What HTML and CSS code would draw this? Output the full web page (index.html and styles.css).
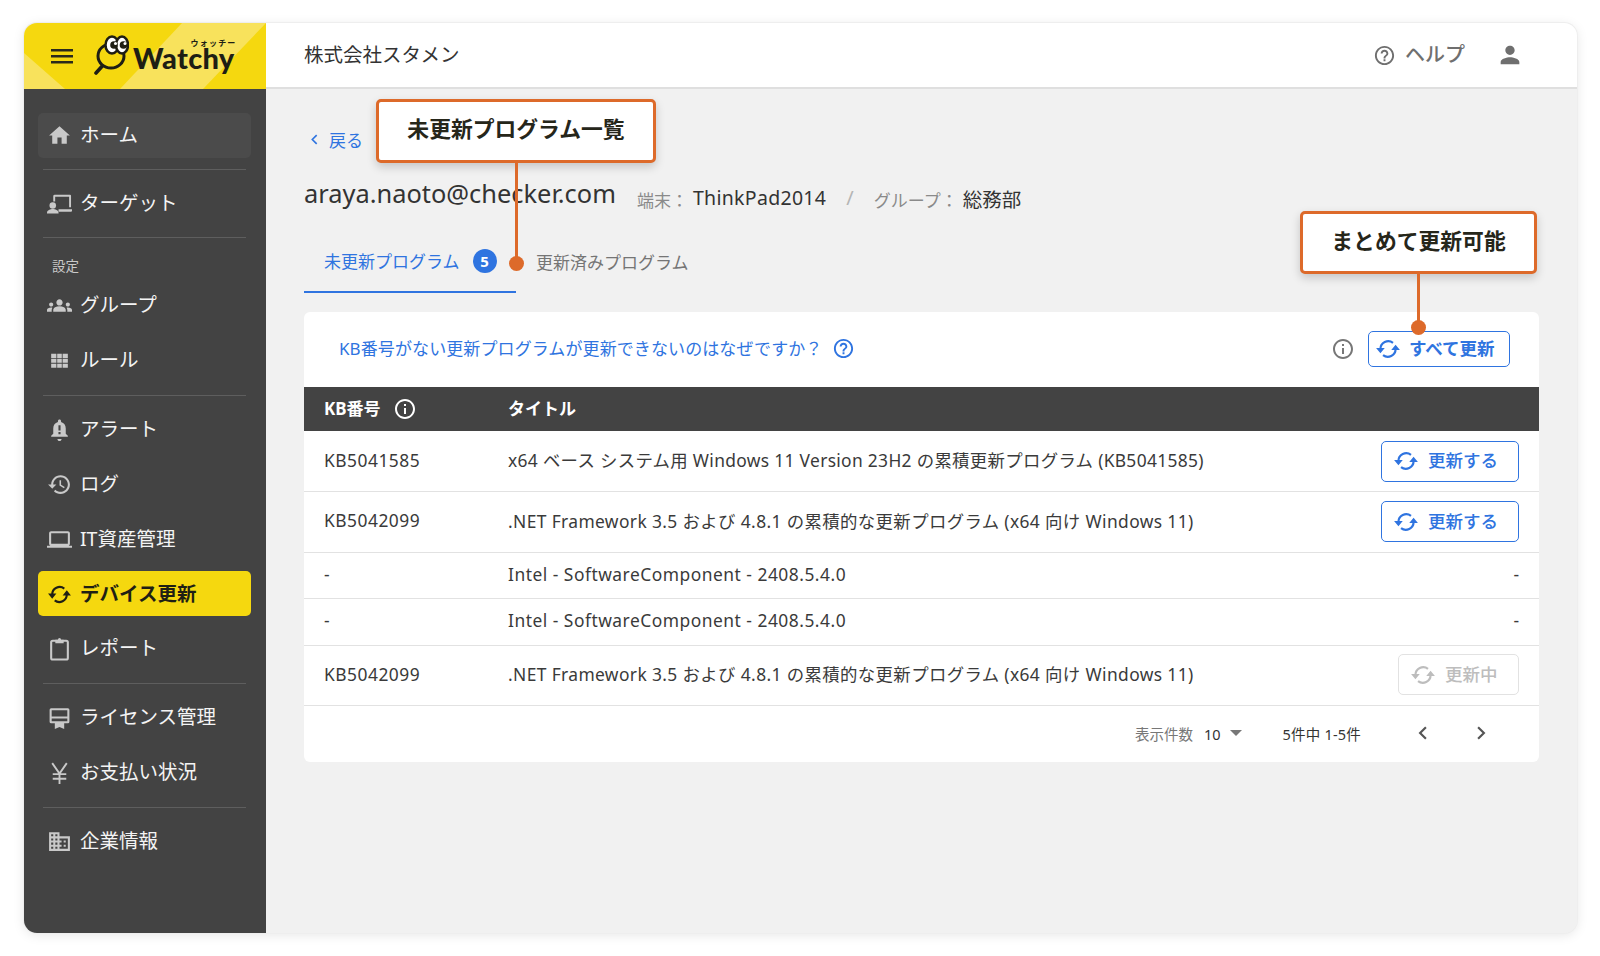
FILE: index.html
```html
<!DOCTYPE html>
<html lang="ja">
<head>
<meta charset="utf-8">
<title>Watchy</title>
<link rel="stylesheet" href="styles.css">
</head>
<body>
<svg class="defs" width="0" height="0" aria-hidden="true">
  <defs>
    <symbol id="i-sync" viewBox="0 0 24 24"><path d="M5 12A7.200 7.200 0 0 1 16.600 6.300" fill="none" stroke="currentColor" stroke-width="2"/><path d="M19 12A7.200 7.200 0 0 1 7.400 17.700" fill="none" stroke="currentColor" stroke-width="2"/><path d="M1 11h8L5 16zM15 13h8L19 8z" fill="currentColor"/></symbol>
    <symbol id="i-home" viewBox="0 0 24 24"><path fill="currentColor" d="M10 20v-6h4v6h5v-8h3L12 3 2 12h3v8z"/></symbol>
    <symbol id="i-target" viewBox="0 0 26 24"><path fill="currentColor" d="M8 3h16a1 1 0 0 1 1 1v12h-2V5H8.500v5H6.500V4.500A1.500 1.500 0 0 1 8 3zM12 18h14v1.500a1 1 0 0 1-1 1H12z"/><circle cx="6" cy="14" r="3.400" fill="currentColor"/><path fill="currentColor" d="M0 21.500c0-2.500 3.500-3.700 6-3.700s6 1.200 6 3.700v1H0z"/></symbol>
    <symbol id="i-groups" viewBox="0 0 24 24"><path fill="currentColor" d="M12 12.750c1.630 0 3.070.390 4.240.900 1.080.480 1.760 1.560 1.760 2.730V18H6v-1.610c0-1.180.680-2.260 1.760-2.730 1.170-.520 2.610-.910 4.240-.910zM4 13c1.100 0 2-.900 2-2s-.900-2-2-2-2 .900-2 2 .900 2 2 2zm1.130 1.100C4.760 14.040 4.390 14 4 14c-.990 0-1.930.210-2.780.580C.480 14.900 0 15.620 0 16.430V18h4.500v-1.610c0-.830.230-1.610.630-2.290zM20 13c1.100 0 2-.900 2-2s-.900-2-2-2-2 .900-2 2 .900 2 2 2zm4 3.430c0-.810-.480-1.530-1.220-1.850C21.930 14.210 20.990 14 20 14c-.390 0-.760.040-1.130.100.400.680.630 1.460.630 2.290V18H24v-1.570zM12 6c1.660 0 3 1.340 3 3s-1.340 3-3 3-3-1.340-3-3 1.340-3 3-3z"/></symbol>
    <symbol id="i-grid" viewBox="0 0 24 24"><path fill="currentColor" d="M4 5.500h5v4H4zM9.800 5.500h4.400v4H9.800zM15 5.500h5v4h-5zM4 10.200h5v4H4zM9.800 10.200h4.400v4H9.800zM15 10.200h5v4h-5zM4 15h5v4H4zM9.800 15h4.400v4H9.800zM15 15h5v4h-5z"/></symbol>
    <symbol id="i-bell" viewBox="0 0 24 24"><path fill="currentColor" fill-rule="evenodd" d="M12 23c1.100 0 2-.900 2-2h-4c0 1.100.900 2 2 2zm6-7v-5c0-3.070-1.630-5.640-4.500-6.320V4c0-.830-.670-1.500-1.500-1.500s-1.500.670-1.500 1.500v.680C7.640 5.360 6 7.920 6 11v5l-2 2v1h16v-1l-2-2zM11 8h2v5h-2zm0 6.500h2v2h-2z"/></symbol>
    <symbol id="i-history" viewBox="0 0 24 24"><path fill="currentColor" d="M13 3c-4.970 0-9 4.030-9 9H1l3.890 3.890.070.140L9 12H6c0-3.870 3.130-7 7-7s7 3.130 7 7-3.130 7-7 7c-1.930 0-3.680-.790-4.940-2.060l-1.420 1.420C8.270 19.990 10.510 21 13 21c4.970 0 9-4.030 9-9s-4.030-9-9-9zm-1 5v5l4.280 2.540.720-1.210-3.500-2.080V8H12z"/></symbol>
    <symbol id="i-laptop" viewBox="0 0 24 24"><path fill="currentColor" d="M20 18c1.100 0 1.990-.900 1.990-2L22 6c0-1.100-.900-2-2-2H4c-1.100 0-2 .900-2 2v10c0 1.100.900 2 2 2H0v2h24v-2h-4zM4 6h16v10H4V6z"/></symbol>
    <symbol id="i-clip" viewBox="0 0 24 24"><rect x="4" y="4.500" width="16" height="18" rx="1.500" fill="none" stroke="currentColor" stroke-width="2"/><path fill="currentColor" d="M8 3.500h2.500a1.500 1.500 0 0 1 3 0H16V7H8z"/></symbol>
    <symbol id="i-license" viewBox="0 0 24 24"><path fill="currentColor" d="M4 3h16a1.500 1.500 0 0 1 1.500 1.500V16a1.500 1.500 0 0 1-1.500 1.500h-3.500V23L12 21l-4.500 2v-5.500H4A1.500 1.500 0 0 1 2.500 16V4.500A1.500 1.500 0 0 1 4 3zm.500 2v6h15V5zm0 8v2.500h15V13z"/></symbol>
    <symbol id="i-yen" viewBox="0 0 24 24"><path fill="none" stroke="currentColor" stroke-width="1.800" d="M5 3l7 10 7-10M12 13v10M5.500 13.500h13M5.500 18h13"/></symbol>
    <symbol id="i-domain" viewBox="0 0 24 24"><path fill="currentColor" d="M12 7V3H2v18h20V7H12zM6 19H4v-2h2v2zm0-4H4v-2h2v2zm0-4H4V9h2v2zm0-4H4V5h2v2zm4 12H8v-2h2v2zm0-4H8v-2h2v2zm0-4H8V9h2v2zm0-4H8V5h2v2zm10 12h-8v-2h2v-2h-2v-2h2v-2h-2V9h8v10zm-2-8h-2v2h2v-2zm0 4h-2v2h2v-2z"/></symbol>
    <symbol id="i-person" viewBox="0 0 24 24"><path fill="currentColor" d="M12 12c2.210 0 4-1.790 4-4s-1.790-4-4-4-4 1.790-4 4 1.790 4 4 4zm0 2c-2.670 0-8 1.340-8 4v2h16v-2c0-2.660-5.330-4-8-4z"/></symbol>
    <symbol id="i-help" viewBox="0 0 24 24"><path fill="currentColor" d="M11 18h2v-2h-2v2zm1-16C6.480 2 2 6.480 2 12s4.480 10 10 10 10-4.480 10-10S17.520 2 12 2zm0 18c-4.410 0-8-3.590-8-8s3.590-8 8-8 8 3.590 8 8-3.590 8-8 8zm0-14c-2.210 0-4 1.790-4 4h2c0-1.100.900-2 2-2s2 .900 2 2c0 2-3 1.750-3 5h2c0-2.250 3-2.500 3-5 0-2.210-1.790-4-4-4z"/></symbol>
    <symbol id="i-info" viewBox="0 0 24 24"><path fill="currentColor" d="M11 7h2v2h-2zm0 4h2v6h-2zm1-9C6.480 2 2 6.480 2 12s4.480 10 10 10 10-4.480 10-10S17.520 2 12 2zm0 18c-4.410 0-8-3.590-8-8s3.590-8 8-8 8 3.590 8 8-3.590 8-8 8z"/></symbol>
    <symbol id="i-left" viewBox="0 0 24 24"><path fill="none" stroke="currentColor" stroke-width="2.600" d="M15.500 5l-7 7 7 7"/></symbol>
    <symbol id="i-right" viewBox="0 0 24 24"><path fill="none" stroke="currentColor" stroke-width="2.600" d="M8.500 5l7 7-7 7"/></symbol>
  </defs>
</svg>

<div class="shell">
  <div class="brand">
    <svg class="brand-bg" viewBox="0 0 242 66" preserveAspectRatio="none" aria-hidden="true">
      <path d="M158 0h84L179 66H96z" fill="#f8e25c"/>
      <path d="M0 30l41 36H0z" fill="#f8e25c"/>
    </svg>
    <svg class="burger" viewBox="0 0 22 16" aria-hidden="true"><path d="M0 1h22v2.400H0zM0 7h22v2.400H0zM0 13h22v2.400H0z" fill="#2a2a1c"/></svg>
    <svg class="logo-mark" viewBox="0 0 36 40" aria-hidden="true">
      <path d="M3 38l9-10" stroke="#1e1e14" stroke-width="3.600" stroke-linecap="round"/>
      <ellipse cx="18" cy="21" rx="13" ry="12" fill="#f5d80f" stroke="#1e1e14" stroke-width="3"/>
      <ellipse cx="19" cy="10" rx="6.500" ry="8.500" fill="#fff" stroke="#1e1e14" stroke-width="2.500"/>
      <ellipse cx="29" cy="10" rx="6" ry="8.500" fill="#fff" stroke="#1e1e14" stroke-width="2.500"/>
      <circle cx="21" cy="10" r="3.800" fill="#1e1e14"/>
      <circle cx="30.500" cy="10" r="3.800" fill="#1e1e14"/>
      <circle cx="22.500" cy="8.500" r="1.500" fill="#fff"/>
      <circle cx="32" cy="8.500" r="1.500" fill="#fff"/>
    </svg>
    <div class="logo-text">
      <span class="logo-kana">ウォッチー</span>
      <span class="logo-word">Watchy</span>
    </div>
  </div>

  <header class="topbar">
    <div class="company">株式会社スタメン</div>
    <div class="top-actions">
      <svg class="ico-help"><use href="#i-help"/></svg>
      <span class="help-label">ヘルプ</span>
      <svg class="ico-person"><use href="#i-person"/></svg>
    </div>
  </header>

  <nav class="sidebar">
    <a class="nav-item nav-home nav-up"><svg class="nav-ico"><use href="#i-home"/></svg><span>ホーム</span></a>
    <hr class="nav-rule">
    <a class="nav-item nav-up"><svg class="nav-ico"><use href="#i-target"/></svg><span>ターゲット</span></a>
    <hr class="nav-rule">
    <div class="nav-label">設定</div>
    <a class="nav-item"><svg class="nav-ico"><use href="#i-groups"/></svg><span>グループ</span></a>
    <a class="nav-item"><svg class="nav-ico"><use href="#i-grid"/></svg><span>ルール</span></a>
    <hr class="nav-rule nav-rule-low">
    <a class="nav-item"><svg class="nav-ico"><use href="#i-bell"/></svg><span>アラート</span></a>
    <a class="nav-item"><svg class="nav-ico"><use href="#i-history"/></svg><span>ログ</span></a>
    <a class="nav-item"><svg class="nav-ico"><use href="#i-laptop"/></svg><span>IT資産管理</span></a>
    <a class="nav-item nav-active"><svg class="nav-ico"><use href="#i-sync"/></svg><span>デバイス更新</span></a>
    <a class="nav-item"><svg class="nav-ico"><use href="#i-clip"/></svg><span>レポート</span></a>
    <hr class="nav-rule nav-rule-low">
    <a class="nav-item"><svg class="nav-ico"><use href="#i-license"/></svg><span>ライセンス管理</span></a>
    <a class="nav-item"><svg class="nav-ico"><use href="#i-yen"/></svg><span>お支払い状況</span></a>
    <hr class="nav-rule nav-rule-low">
    <a class="nav-item"><svg class="nav-ico"><use href="#i-domain"/></svg><span>企業情報</span></a>
  </nav>

  <main class="content">
    <a class="back"><svg class="back-ico"><use href="#i-left"/></svg><span>戻る</span></a>
    <div class="title-row">
      <h1 class="email">araya.naoto@checker.com</h1>
      <span class="meta-label meta-first">端末：</span><span class="meta-value">ThinkPad2014</span>
      <span class="meta-sep">/</span>
      <span class="meta-label">グループ：</span><span class="meta-value meta-group">総務部</span>
    </div>
    <div class="tabs">
      <div class="tab tab-on"><span>未更新プログラム</span><span class="badge">5</span></div>
      <div class="tab">更新済みプログラム</div>
    </div>

    <section class="card">
      <div class="toolbar">
        <a class="faq">KB番号がない更新プログラムが更新できないのはなぜですか？</a>
        <svg class="faq-ico"><use href="#i-help"/></svg>
        <svg class="tool-info"><use href="#i-info"/></svg>
        <button class="btn btn-all"><svg class="btn-ico"><use href="#i-sync"/></svg><span>すべて更新</span></button>
      </div>
      <table class="updates">
        <thead>
          <tr><th class="c-kb"><span class="th-in">KB番号<svg class="th-ico"><use href="#i-info"/></svg></span></th><th>タイトル</th><th></th></tr>
        </thead>
        <tbody>
          <tr class="tall"><td class="latin">KB5041585</td><td class="tight">x64 ベース システム用 Windows 11 Version 23H2 の累積更新プログラム (KB5041585)</td><td class="c-act"><button class="btn btn-row"><svg class="btn-ico"><use href="#i-sync"/></svg><span>更新する</span></button></td></tr>
          <tr class="tall"><td class="latin">KB5042099</td><td>.NET Framework 3.5 および 4.8.1 の累積的な更新プログラム (x64 向け Windows 11)</td><td class="c-act"><button class="btn btn-row"><svg class="btn-ico"><use href="#i-sync"/></svg><span>更新する</span></button></td></tr>
          <tr class="low"><td>-</td><td class="latin">Intel - SoftwareComponent - 2408.5.4.0</td><td class="c-act">-</td></tr>
          <tr class="low"><td>-</td><td class="latin">Intel - SoftwareComponent - 2408.5.4.0</td><td class="c-act">-</td></tr>
          <tr class="tall"><td class="latin">KB5042099</td><td>.NET Framework 3.5 および 4.8.1 の累積的な更新プログラム (x64 向け Windows 11)</td><td class="c-act"><button class="btn btn-off"><svg class="btn-ico"><use href="#i-sync"/></svg><span>更新中</span></button></td></tr>
        </tbody>
      </table>
      <div class="pager">
        <span class="pg-label">表示件数</span>
        <span class="pg-size">10</span>
        <span class="pg-caret"></span>
        <span class="pg-range">5件中 1-5件</span>
        <svg class="pg-arrow pg-prev"><use href="#i-left"/></svg>
        <svg class="pg-arrow pg-next"><use href="#i-right"/></svg>
      </div>
    </section>

    <div class="callout callout-list">未更新プログラム一覧</div>
    <div class="callout-line line-list"></div>
    <div class="callout-dot dot-list"></div>
    <div class="callout callout-all">まとめて更新可能</div>
    <div class="callout-line line-all"></div>
    <div class="callout-dot dot-all"></div>
  </main>
</div>
</body>
</html>
```

FILE: styles.css
```css
* { box-sizing: border-box; }
html, body { margin: 0; height: 956px; overflow: hidden; background: #fff; }
body {
  padding: 23px 23px 23px 24px;
  font-family: "Noto Sans", "Noto Sans CJK JP", sans-serif;
  color: #333;
}
.defs { position: absolute; }

.shell {
  height: 910px;
  display: grid;
  grid-template-columns: 242px 1fr;
  grid-template-rows: 66px 1fr;
  border-radius: 13px;
  overflow: hidden;
  background: #f1f1f1;
  box-shadow: 0 0 0 1px #eeeeee, 0 2px 12px rgba(0,0,0,.10);
}

.brand {
  position: relative;
  background: #f5d80f;
  display: flex;
  align-items: center;
  padding-left: 27px;
  overflow: hidden;
}
.brand-bg { position: absolute; inset: 0; width: 100%; height: 100%; }
.burger { position: relative; width: 22px; height: 16px; flex: none; }
.logo-mark { position: relative; width: 36px; height: 40px; margin-left: 20px; flex: none; margin-top: -2px; }
.logo-text { position: relative; margin-left: 4px; margin-top: 3px; }
.logo-kana { position: absolute; top: -2px; right: -2px; font-size: 8px; font-weight: 700; color: #1e1e14; line-height: 9px; letter-spacing: 1.2px; white-space: nowrap; }
.logo-word { display: block; font-family: "Lato", sans-serif; font-weight: 900; font-size: 29px; line-height: 36px; color: #1e1e14; letter-spacing: .3px; }

.topbar {
  background: #fff;
  border-bottom: 2px solid #dfdfdf;
  display: flex;
  align-items: center;
  justify-content: space-between;
  padding: 0 53px 4px 38px;
}
.company { font-size: 19.5px; color: #333; }
.top-actions { display: flex; align-items: center; color: #6f6f6f; }
.ico-help { width: 23px; height: 23px; margin-top: 4px; }
.help-label { font-size: 20px; font-weight: 500; margin-left: 9px; margin-right: 31px; }
.ico-person { width: 28px; height: 28px; margin-top: 4px; }

.sidebar {
  background: #434343;
  padding: 24px 15px 0 14px;
  display: flex;
  flex-direction: column;
  gap: 10px;
}
.nav-item {
  height: 45px;
  flex: none;
  display: flex;
  align-items: center;
  padding-left: 9px;
  border-radius: 5px;
  font-size: 19.5px;
  color: #f4f4f4;
}
.nav-up { padding-bottom: 5px; }
.nav-ico { width: 25px; height: 25px; color: #c9c9c9; flex: none; margin: 3px 8px 0 0; }
.nav-up .nav-ico { margin-top: 5px; }
.nav-home { background: #4b4b4b; }
.nav-active { background: #f5d80f; color: #1f1f14; font-weight: 700; margin-top: 1px; margin-bottom: -2px; padding-bottom: 2px; }
.nav-active .nav-ico { color: #1f1f14; }
.nav-rule { border: 0; height: 1px; background: #5e5e5e; margin: 1px 5px; flex: none; }
.nav-rule-low { margin: 4px 5px -1px; }
.nav-label { font-size: 13.5px; color: #c9c9c9; padding-left: 14px; height: 20px; line-height: 20px; margin: 7px 0 -5px; }

.content { position: relative; padding: 0 38px; background: #f1f1f1; }

.back { display: flex; align-items: center; color: #2f74e0; font-size: 17px; height: 24px; margin-top: 38px; padding-left: 3px; }
.back-ico { width: 15px; height: 15px; margin-right: 7px; }
.title-row { display: flex; align-items: flex-start; margin-top: 25px; height: 40px; color: #333; white-space: nowrap; }
.email { font-size: 25.4px; font-weight: 400; margin: 0; color: #333; white-space: nowrap; }
.meta-label { font-size: 17px; color: #8a8a8a; margin-top: 11px; }
.meta-first { margin-left: 21px; }
.meta-value { font-size: 19.5px; color: #333; margin: 8px 0 0 5px; letter-spacing: .3px; }
.meta-group { margin-left: 5px; letter-spacing: 0; }
.meta-sep { font-size: 20px; color: #b5b5b5; margin: 8px 20px 0; }

.tabs { display: flex; height: 89px; margin-top: 7px; }
.tab { display: flex; align-items: center; padding: 7px 20px 0; font-size: 17px; color: #757575; height: 70px; white-space: nowrap; }
.tab-on { color: #2f74e0; border-bottom: 2px solid #2f74e0; width: 212px; flex: none; }
.badge { width: 24px; height: 24px; border-radius: 50%; background: #2f74e0; color: #fff; font-size: 15px; font-weight: 700; display: flex; align-items: center; justify-content: center; margin-left: 13px; flex: none; }

.card { background: #fff; border-radius: 6px; overflow: hidden; }
.toolbar { height: 75px; display: flex; align-items: center; padding: 0 29px 2px 35px; }
.faq { color: #2f74e0; font-size: 17px; letter-spacing: .1px; padding-bottom: 3px; }
.faq-ico { width: 23px; height: 23px; color: #2f74e0; margin-left: 10px; }
.tool-info { width: 24px; height: 24px; color: #777; margin-left: auto; margin-right: 13px; }

.btn { display: flex; align-items: center; background: #fff; border: 1px solid #2f74e0; border-radius: 5px; color: #2f74e0; font-family: inherit; font-weight: 500; padding: 0; cursor: default; white-space: nowrap; }
.btn span { padding-bottom: 3px; }
.btn-ico { width: 26px; height: 26px; flex: none; }
.btn-all { width: 142px; height: 36px; font-size: 17.5px; font-weight: 700; padding-left: 6px; }
.btn-all .btn-ico { margin-right: 8px; }
.btn-row { width: 138px; height: 41px; font-size: 17.5px; padding-left: 11px; margin: 3px 0 0 auto; }
.btn-row .btn-ico { margin-right: 9px; }
.btn-off { width: 121px; height: 41px; font-size: 17.5px; padding-left: 11px; margin: 2px 0 0 auto; color: #bdbdbd; border-color: #e2e2e2; }
.btn-off .btn-ico { margin-right: 9px; }

.updates { width: 100%; border-collapse: collapse; table-layout: fixed; font-size: 17.4px; letter-spacing: .38px; color: #3a3a3a; }
.updates th { background: #434343; color: #fff; height: 44px; text-align: left; font-size: 17px; font-weight: 700; padding: 0 0 4px 20px; letter-spacing: 0; }
.updates th.c-kb { width: 184px; }
.updates th:last-child { width: 180px; }
.th-in { display: flex; align-items: center; }
.th-ico { width: 24px; height: 24px; margin: 3px 0 0 12px; color: #fff; }
.updates td { padding: 0 0 3px 20px; border-bottom: 1px solid #e2e2e2; white-space: nowrap; }
.updates td.latin { letter-spacing: .5px; }
.updates td.tight { letter-spacing: .32px; }
.updates td.c-act { padding-right: 20px; text-align: right; letter-spacing: 0; }
.updates tr.tall { height: 60.500px; }
.updates tr.low { height: 46.500px; }

.pager { height: 56px; display: flex; align-items: center; padding: 0 0 2px 831px; font-size: 14.500px; color: #333; }
.pg-label { color: #777; }
.pg-size { margin-left: 11px; color: #333; margin-top: 2px; }
.pg-caret { width: 0; height: 0; border-left: 6px solid transparent; border-right: 6px solid transparent; border-top: 6px solid #777; margin-left: 9px; }
.pg-range { margin-left: 41px; letter-spacing: .2px; }
.pg-arrow { width: 20px; height: 20px; color: #555; }
.pg-prev { margin-left: 52px; }
.pg-next { margin-left: 38px; }

.callout {
  position: absolute;
  background: #fff;
  border: 3px solid #dd6a2a;
  border-radius: 5px;
  color: #26261a;
  font-size: 21.8px;
  font-weight: 700;
  display: flex;
  align-items: center;
  justify-content: center;
  padding-bottom: 7px;
  box-shadow: 0 4px 10px rgba(0,0,0,.18);
}
.callout-list { left: 110px; top: 10px; width: 280px; height: 64px; }
.callout-all { left: 1034px; top: 122px; width: 237px; height: 63px; }
.callout-line { position: absolute; width: 3px; background: #dd6a2a; }
.line-list { left: 248.500px; top: 74px; height: 97px; }
.line-all { left: 1150.500px; top: 185px; height: 49px; }
.callout-dot { position: absolute; width: 15px; height: 15px; border-radius: 50%; background: #dd6a2a; }
.dot-list { left: 242.500px; top: 166.500px; }
.dot-all { left: 1144.500px; top: 230.500px; }
```
